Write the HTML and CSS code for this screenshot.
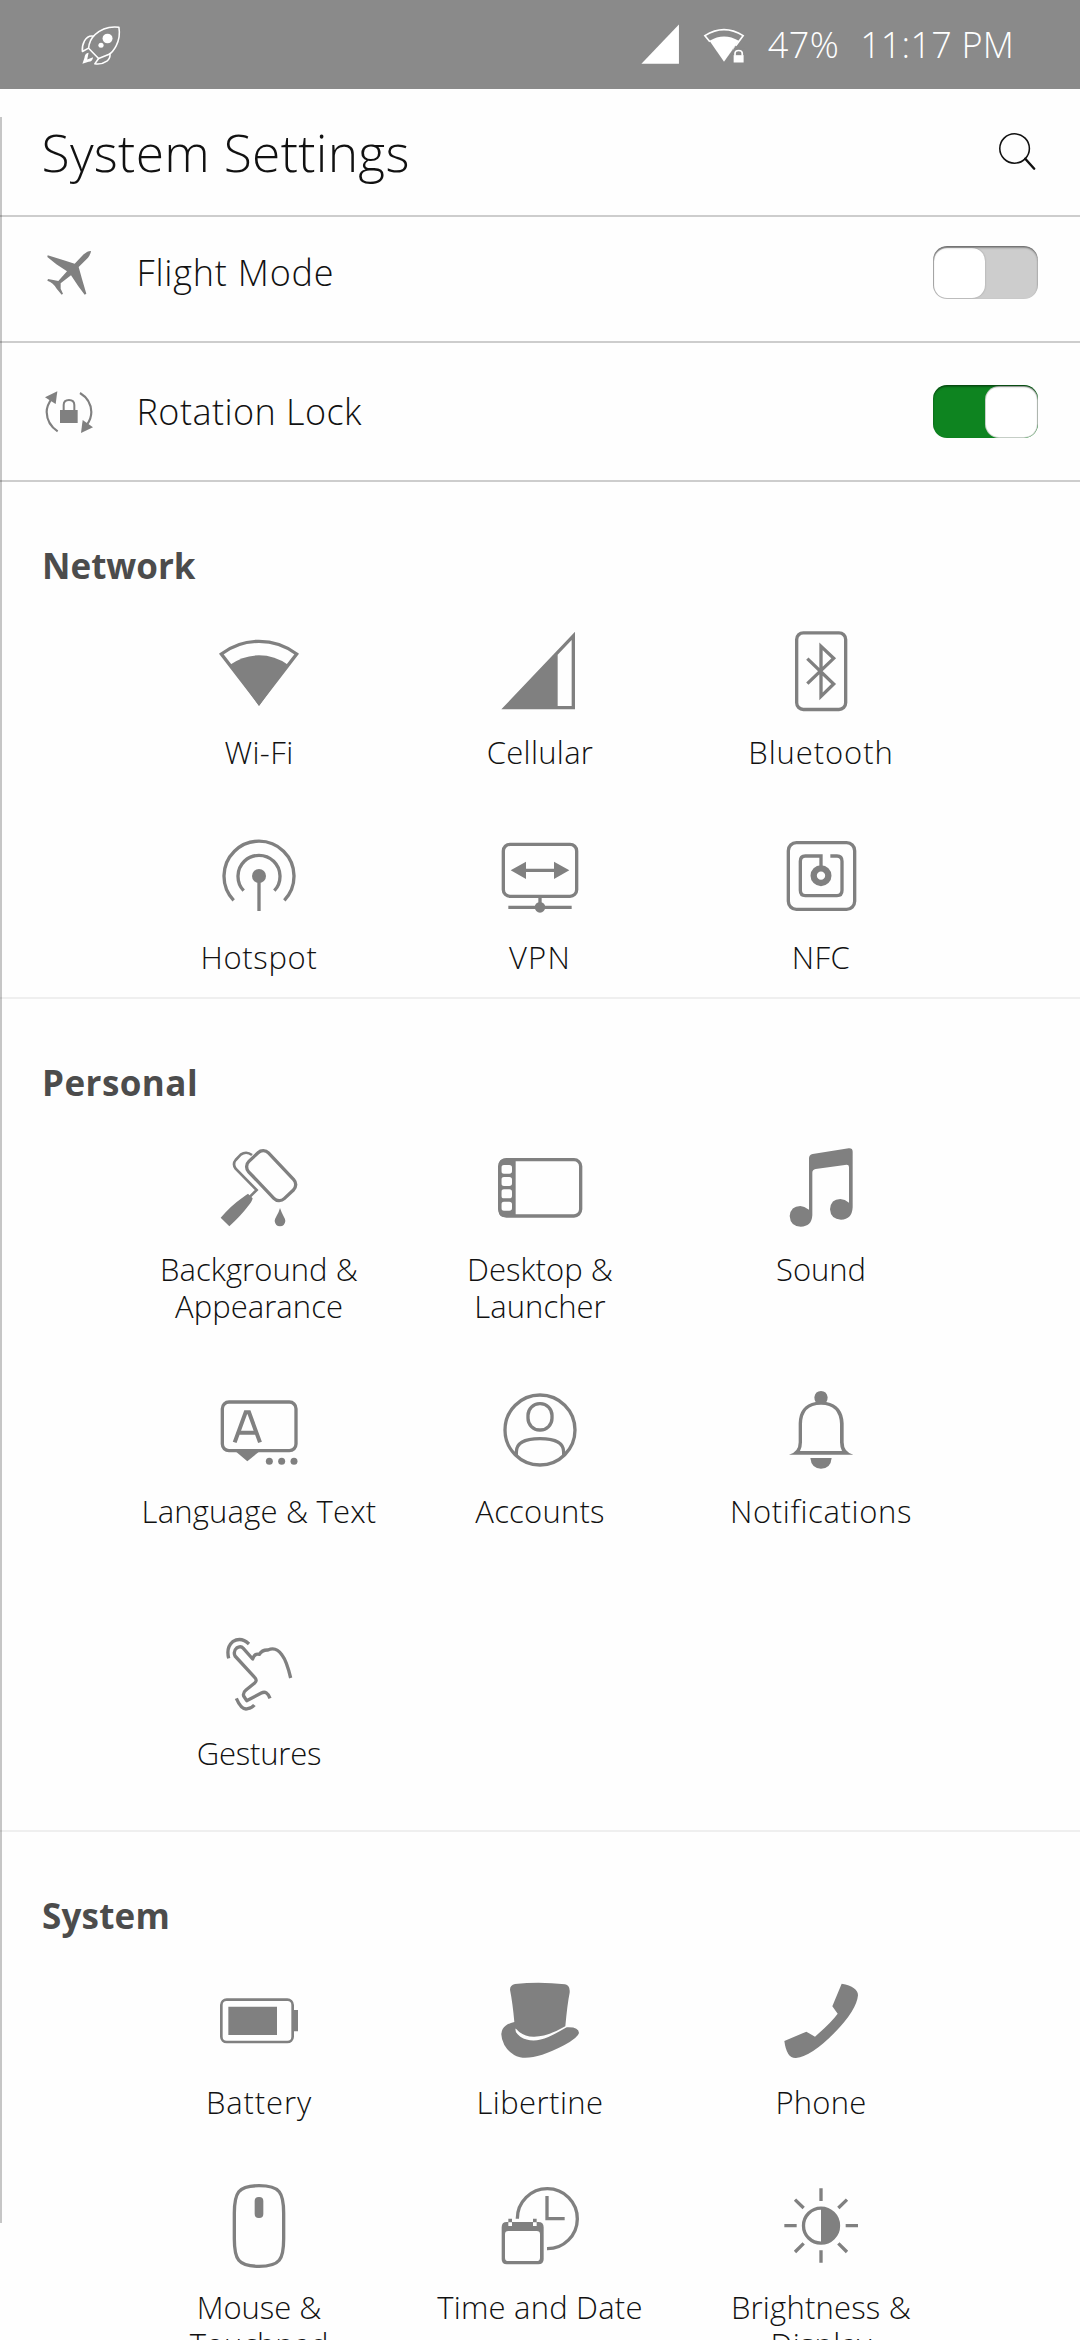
FILE: index.html
```html
<!DOCTYPE html>
<html lang="en">
<head>
<meta charset="utf-8">
<title>System Settings</title>
<link rel="stylesheet" href="styles.css">
</head>
<body>
<div class="status">
  <svg class="s-icon" viewBox="233 70.500 122 126" preserveAspectRatio="none">
    <g fill="none" stroke="#fff" stroke-width="4.5" stroke-linejoin="round">
      <path d="M258 143Q260 118 276 103Q304 75 346 80Q351 110 338 136Q328 156 316 162L287 174Z"/>
      <path d="M273 107Q256 103 246 121Q238 136 240 153L258 143"/>
      <path d="M287 174L276 190Q296 193 311 182Q322 173 320 160"/>
    </g>
    <circle cx="313" cy="114" r="14.5" fill="#fff"/><circle cx="294" cy="134" r="7.5" fill="#fff"/>
    <path fill="#fff" d="M258 157Q247 159 246 172L240 190L258 184Q270 182 271 170L254 177Z"/>
  </svg>
  <div class="status-right">
    <svg class="s-icon" viewBox="285 70.500 122 126" preserveAspectRatio="none"><path fill="#fff" d="M292 189.500L401 72V189.500Z"/></svg>
    <svg class="s-icon" viewBox="470 70.500 122 126" preserveAspectRatio="none">
      <path fill="none" stroke="#fff" stroke-width="5" d="M490 124L475.500 105.500Q531 69 586.500 105.500L565 136"/>
      <path fill="#fff" d="M489 121Q531 95 574 121L531 183.500Z"/>
      <rect x="556" y="145" width="36" height="44" fill="#8a8a8a"/>
      <path fill="#fff" d="M559 164H588V186H559Z"/>
      <path fill="none" stroke="#fff" stroke-width="5" d="M563 166V159Q563 150 573.500 150Q584 150 584 159V166"/>
      <path fill="#fff" d="M531 183.500L574 121L556 150V148Z"/>
    </svg>
    <span class="percent">47%</span>
    <span class="clock">11:17 PM</span>
  </div>
</div>
<header class="header">
  <h1 class="title">System Settings</h1>
  <svg class="s-icon" viewBox="1322 393 122 126" preserveAspectRatio="none"><ellipse cx="1376" cy="445.500" rx="43" ry="44" fill="none" stroke="#111" stroke-width="4.500"/><path d="M1407 476L1433 506" stroke="#111" stroke-width="7" stroke-linecap="round"/></svg>
</header>
<main class="content">
  <div class="list">
    <div class="row">
      <svg class="r-icon" viewBox="134 115 144 144"><path fill="#808080" d="M142 134L188 148L223 159L250 131Q263 120 272 121Q272 129 263 141L235 169L245 205L258 249L253 252L234 227L212 194L181 218V234L188 249L184 252L169 234Q159 216 141 210L143 205L159 208L174 211L200 182L168 161L141 139Z"/></svg>
      <span class="row-label">Flight Mode</span>
      <span class="toggle"><span class="knob"></span></span>
    </div>
    <div class="row">
      <svg class="r-icon" viewBox="134 531 144 144">
        <g fill="none" stroke="#808080" stroke-width="6.500"><path d="M172 661Q140 640 139 603Q139 583 155 562"/><path d="M239 546Q272 566 273 603Q273 623 260 641"/></g>
        <g fill="#808080"><path d="M134 559L171 541L166 579Z"/><path d="M278 649L242 666L247 627Z"/><path d="M179 597H232V636H179Z"/></g>
        <path fill="none" stroke="#808080" stroke-width="6" d="M190 600V582Q190 567 206 567Q222 567 222 582V600"/>
      </svg>
      <span class="row-label row-label-lock">Rotation Lock</span>
      <span class="toggle on"><span class="knob"></span></span>
    </div>
  </div>

  <section class="section">
    <h2 class="heading">Network</h2>
    <div class="grid">
      <div class="item">
        <svg class="icon" viewBox="261 86 252 252"><path class="st" d="M387 308L274 161Q324 123 387 123Q450 123 500 161Z"/><path class="fl" d="M299 194Q340 165 387 165Q434 165 475 194L387 317Z"/></svg>
        <span class="label wifi">Wi-Fi</span>
      </div>
      <div class="item">
        <svg class="icon" viewBox="1104 86 252 252"><path class="fl" fill-rule="evenodd" d="M1114 327L1335 94V327ZM1283 163V317H1325V119Z"/></svg>
        <span class="label cellular">Cellular</span>
      </div>
      <div class="item">
        <svg class="icon" viewBox="537 86 252 252"><rect class="st" x="590" y="97.500" width="147" height="230" rx="20"/><path class="st" d="M622 175L701 251L663 288V138L701 174L622 250"/></svg>
        <span class="label bluetooth">Bluetooth</span>
      </div>
      <div class="item">
        <svg class="icon" viewBox="261 702 252 252"><path class="st" d="M311 901A105 105 0 1 1 463 901M341 872A63 63 0 1 1 433 872M387 828V933"/><circle class="fl" cx="387" cy="828" r="21"/></svg>
        <span class="label hotspot">Hotspot</span>
      </div>
      <div class="item">
        <svg class="icon" viewBox="1104 702 252 252"><rect class="st" x="1120" y="733" width="220" height="156" rx="20"/><path class="st" d="M1180 811H1280M1135 922H1325M1230 889V920"/><path class="fl" d="M1142 811L1188 785V837ZM1318 811L1272 785V837Z"/><circle class="fl" cx="1230" cy="922" r="16"/></svg>
        <span class="label vpn">VPN</span>
      </div>
      <div class="item">
        <svg class="icon" viewBox="537 702 252 252"><rect class="st" x="565" y="728" width="199" height="200" rx="24"/><path class="st" d="M663 800V768H616Q601 768 601 784V871Q601 887 616 887H711Q726 887 726 871V784Q726 768 711 768H691"/><circle cx="663" cy="827" r="22" fill="none" stroke="#808080" stroke-width="19"/></svg>
        <span class="label nfc">NFC</span>
      </div>
    </div>
  </section>

  <section class="section tall">
    <h2 class="heading personal">Personal</h2>
    <div class="grid">
      <div class="item">
        <svg class="icon" viewBox="261 78 252 252">
          <rect class="st" x="-41" y="-77" width="82" height="154" rx="22" transform="translate(423.500 167) rotate(-43.500)"/>
          <path class="st thin" d="M366 105Q349 92 332 104L317 120Q307 132 317 146L380 210L360 230"/>
          <path class="fl" d="M272 293Q304 256 333 236Q349 224 354 221L368 235Q366 245 354 259Q333 287 298 319ZM450 264Q454 276 460 287Q466 297 466 303Q464 319 450 319Q436 319 434 303Q434 297 440 287Q447 276 450 264Z"/>
        </svg>
        <span class="label background">Background &amp;<br>Appearance</span>
      </div>
      <div class="item">
        <svg class="icon" viewBox="1104 78 252 252"><rect class="st" x="1109" y="119" width="243" height="169" rx="20"/><path class="fl" fill-rule="evenodd" d="M1124 116H1157V291H1124Q1106 291 1106 272V136Q1106 116 1124 116ZM1122 135Q1114 135 1114 143V153Q1114 161 1122 161H1138Q1146 161 1146 153V143Q1146 135 1138 135ZM1122 171Q1114 171 1114 179V190Q1114 198 1122 198H1138Q1146 198 1146 190V179Q1146 171 1138 171ZM1122 208Q1114 208 1114 216V227Q1114 235 1122 235H1138Q1146 235 1146 227V216Q1146 208 1138 208ZM1122 245Q1114 245 1114 253V264Q1114 272 1122 272H1138Q1146 272 1146 264V253Q1146 245 1138 245Z"/></svg>
        <span class="label desktop">Desktop &amp;<br>Launcher</span>
      </div>
      <div class="item">
        <svg class="icon" viewBox="537 78 252 252"><path class="fl" d="M627 269V115Q627 104 638 102L746 85Q758 84 758 95V262Q756 299 723 299Q692 298 690 268Q692 237 721 237Q735 238 747 248V141Q747 134 740 134L647 147Q637 149 637 158V286Q635 320 602 320Q571 319 569 288Q572 258 601 258Q612 259 627 269Z"/></svg>
        <span class="label sound">Sound</span>
      </div>
      <div class="item">
        <svg class="icon" viewBox="261 804 252 252"><rect class="st" x="277" y="846" width="221" height="146" rx="20"/><path class="st bold" d="M314 967L347 877H357L390 967M326 938H378"/><path class="fl" d="M318 995H387L352 1024Z"/><circle class="fl" cx="418" cy="1024" r="10.500"/><circle class="fl" cx="455" cy="1024" r="10.500"/><circle class="fl" cx="492" cy="1024" r="10.500"/></svg>
        <span class="label language">Language &amp; Text</span>
      </div>
      <div class="item">
        <svg class="icon" viewBox="1104 804 252 252"><circle class="st" cx="1230" cy="930" r="105"/><rect class="st" x="1194" y="851" width="72" height="79" rx="35"/><path class="st" d="M1159 1006V996Q1159 956 1230 956Q1301 956 1301 996V1006"/></svg>
        <span class="label accounts">Accounts</span>
      </div>
      <div class="item">
        <svg class="icon" viewBox="537 804 252 252"><path class="fl" fill-rule="evenodd" d="M567 1004Q596 997 596 967V910Q597 856 647 846Q643 840 643 832Q646 813 663 813Q680 813 683 832Q683 840 679 846Q729 856 731 910V967Q731 997 760 1004ZM600 993H726Q720 982 720 967V912Q718 854 663 854Q607 854 606 912V967Q606 982 600 993ZM631 1014H695Q692 1046 663 1046Q634 1045 631 1014Z"/></svg>
        <span class="label notifications">Notifications</span>
      </div>
      <div class="item">
        <svg class="icon" viewBox="261 90 252 252"><path class="st" stroke-linejoin="round" d="M296 175Q288 142 308 125Q333 109 357 132M482 234Q470 183 456 165Q438 139 414 150Q396 149 388 163Q374 159 368 177L340 145Q332 136 320 144Q309 153 315 168L374 232Q383 241 374 249L348 270Q338 278 341 288L350 302L394 279Q411 270 420 295M319 295Q335 332 353 326Q366 324 373 315"/></svg>
        <span class="label gestures">Gestures</span>
      </div>
    </div>
  </section>

  <section class="section">
    <h2 class="heading system">System</h2>
    <div class="grid">
      <div class="item">
        <svg class="icon" viewBox="261 87 252 252"><rect class="st thin" x="274" y="149" width="214" height="127" rx="16"/><path class="fl" d="M295 170H441V255H295ZM489 180H504V244H489Z"/></svg>
        <span class="label battery">Battery</span>
      </div>
      <div class="item">
        <svg class="icon" viewBox="1104 87 252 252"><path class="fl" d="M1140 119Q1140 105 1155 102Q1230 94 1305 103Q1321 106 1319 128Q1312 162 1306 229Q1255 259 1213 260Q1179 261 1158 236H1156Q1156 250 1171 260Q1206 282 1255 261Q1283 248 1310 232Q1346 230 1347 249Q1345 262 1302 286Q1215 331 1170 322Q1140 314 1123 285Q1108 256 1118 237Q1127 222 1153 216Q1148 159 1140 119Z"/></svg>
        <span class="label libertine">Libertine</span>
      </div>
      <div class="item">
        <svg class="icon" viewBox="537 87 252 252"><path class="fl" d="M725 101Q774 110 774 136Q770 180 705 247Q635 319 588 324Q560 326 553 273L619 245L645 260Q695 216 713 191L697 169Z"/></svg>
        <span class="label phone">Phone</span>
      </div>
      <div class="item">
        <svg class="icon" viewBox="261 702 252 252"><path class="st" d="M387 707C450 707 461 728 461 790V866C461 928 450 949 387 949C324 949 313 928 313 866V790C313 728 324 707 387 707Z"/><rect class="fl" x="374" y="741" width="26" height="63" rx="12"/></svg>
        <span class="label mouse">Mouse &amp;<br>Touchpad</span>
      </div>
      <div class="item">
        <svg class="icon" viewBox="1104 702 252 252"><path class="st" d="M1162 806A90 90 0 1 1 1251 896M1251 738V806H1304"/><path class="fl" fill-rule="evenodd" d="M1130 816H1135V806H1146V827H1209V806H1220V816H1225Q1241 816 1241 832V928Q1241 943 1225 943H1130Q1115 943 1115 928V832Q1115 816 1130 816ZM1135 843Q1125 843 1125 853V923Q1125 933 1135 933H1220Q1230 933 1230 923V853Q1230 843 1220 843Z"/><path class="fl" d="M1146 816H1209V829H1146Z"/><path fill="#fff" d="M1135 817H1146V828H1135ZM1209 817H1220V828H1209Z"/></svg>
        <span class="label time">Time and Date</span>
      </div>
      <div class="item">
        <svg class="icon" viewBox="537 702 252 252"><circle class="st" cx="663" cy="827" r="52.500"/><path class="fl" d="M663 775A52 52 0 0 1 663 879Z"/><path class="st" d="M663 715V753M663 901V938M553 827H590M737 827H774M585 749L611 774M741 749L715 774M585 906L611 880M741 906L715 880"/></svg>
        <span class="label brightness">Brightness &amp;<br>Display</span>
      </div>
    </div>
  </section>
</main>
<div class="edge"></div>
</body>
</html>
```
FILE: styles.css
```css
* { box-sizing: border-box; }
body {
  margin: 0;
  width: 1080px;
  height: 2340px;
  overflow: hidden;
  position: relative;
  display: flex;
  flex-direction: column;
  background: #fefefe;
  color: #111;
  font-family: "Open Sans", "Noto Sans", sans-serif;
  font-weight: 350;
}
svg { display: block; overflow: visible; flex: none; }
.s-icon { width: 42px; height: 42px; }

.status {
  flex: none;
  height: 89px;
  padding: 0 66px 0 80px;
  display: flex;
  align-items: center;
  justify-content: space-between;
  background: #8a8a8a;
  color: #fff;
  font-size: 36px;
  font-weight: 320;
}
.status-right { display: flex; align-items: center; gap: 22px; }
.percent { margin-left: 1px; letter-spacing: .4px; }
.clock { margin-left: -1px; letter-spacing: .2px; white-space: nowrap; }

.header {
  flex: none;
  height: 128px;
  padding: 0 42px 0 41.5px;
  display: flex;
  align-items: center;
  justify-content: space-between;
  border-bottom: 2px solid #cdcdcd;
}
.title { margin: 0; font-size: 51.5px; font-weight: 350; letter-spacing: .3px; }

.content { flex: 1; min-height: 0; overflow: hidden; }

/* The list is scrolled a little way under the header. */
.list { margin-top: -13px; }
.row {
  height: 139px;
  padding: 0 42px 0 44.5px;
  display: flex;
  align-items: center;
  border-bottom: 2px solid #cdcdcd;
}
.r-icon { width: 48px; height: 48px; }
.row-label { margin-left: 44px; font-size: 36px; letter-spacing: .8px; }
.row-label-lock { letter-spacing: .45px; }

.toggle {
  position: relative;
  width: 105px;
  height: 53px;
  margin-left: auto;
  padding: 2px 1px 1px;
  display: flex;
  overflow: hidden;
  border-radius: 14px;
  background: #cdcdcd;
}
.toggle::after {
  content: "";
  position: absolute;
  inset: 0;
  border-radius: 14px;
  box-shadow: inset 0 1.5px 2px rgba(0, 0, 0, .5);
}
.toggle.on { justify-content: flex-end; background: #0e8420; }
.knob {
  width: 51px;
  border-radius: 13px;
  background: #fff;
  box-shadow: 0 0 2px rgba(0, 0, 0, .25);
}
.on .knob { box-shadow: 0 0 0 1px #c9d2ca; }

.section + .section { border-top: 2px solid #efefef; }
.heading {
  margin: 0;
  height: 105px;
  padding: 60px 0 0 42px;
  font-size: 35px;
  line-height: 48px;
  font-weight: 700;
  color: #4c4c4c;
}
.personal { letter-spacing: .45px; }
.system { letter-spacing: .2px; }
.grid {
  display: grid;
  grid-template-columns: repeat(3, 281px);
  grid-auto-rows: 205px;
  justify-content: center;
}
.tall .grid { grid-auto-rows: 242px; }
.item { padding-top: 42px; display: flex; flex-direction: column; align-items: center; }
.icon { width: 84px; height: 84px; }
.st { fill: none; stroke: #808080; stroke-width: 10px; }
.thin { stroke-width: 8px; }
.bold { stroke-width: 12px; }
.fl { fill: #808080; }
.label {
  margin-top: 20.5px;
  font-size: 31px;
  line-height: 37px;
  text-align: center;
  white-space: nowrap;
  letter-spacing: .2px;
}
.wifi { letter-spacing: .4px; }
.cellular { letter-spacing: .3px; }
.bluetooth, .battery { letter-spacing: .9px; }
.hotspot, .notifications { letter-spacing: .65px; }
.vpn { letter-spacing: 1.2px; }
.nfc, .libertine { letter-spacing: .45px; }
.background, .desktop { letter-spacing: .05px; }
.gestures { letter-spacing: -.2px; }
.mouse, .sound { letter-spacing: -.05px; }

/* Thin window border along the left side of the screen. */
.edge {
  position: absolute;
  left: 0;
  top: 117px;
  width: 2px;
  height: 2106px;
  background: rgba(0, 0, 0, .22);
}
```
